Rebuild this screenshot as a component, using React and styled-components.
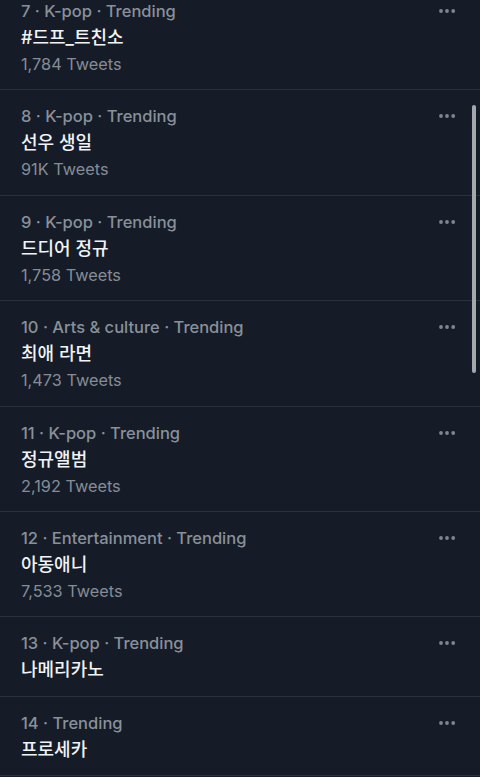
import styled, { createGlobalStyle } from 'styled-components'

const trends = [
  { rank: 7, category: 'K-pop', title: '#드프_트친소', count: '1,784 Tweets' },
  { rank: 8, category: 'K-pop', title: '선우 생일', count: '91K Tweets' },
  { rank: 9, category: 'K-pop', title: '드디어 정규', count: '1,758 Tweets' },
  { rank: 10, category: 'Arts & culture', title: '최애 라면', count: '1,473 Tweets' },
  { rank: 11, category: 'K-pop', title: '정규앨범', count: '2,192 Tweets' },
  { rank: 12, category: 'Entertainment', title: '아동애니', count: '7,533 Tweets' },
  { rank: 13, category: 'K-pop', title: '나메리카노' },
  { rank: 14, title: '프로세카' },
]

const GlobalStyle = createGlobalStyle`
  html, body {
    margin: 0;
    background: #151c27;
    overflow: hidden;
  }
  body {
    font-family: Inter, "Noto Sans CJK KR", sans-serif;
  }
`

const Screen = styled.div`
  position: relative;
  width: 480px;
  height: 777px;
  overflow: hidden;
  background: #151c27;
`

const List = styled.div`
  margin-top: -15px;
`

const Row = styled.div`
  display: flex;
  align-items: flex-start;
  padding: 13px 24px 12.4px 21px;
  border-bottom: 1px solid #2a313c;
`

const Body = styled.div`
  flex: 1;
`

const Meta = styled.div`
  font-size: 16.5px;
  font-weight: 500;
  line-height: 26px;
  color: #89909a;
`

const Title = styled.div`
  font-size: 18px;
  font-weight: 500;
  line-height: 27px;
  color: #f1f3f5;
`

const Count = styled.div`
  font-size: 16.3px;
  line-height: 26px;
  color: #858c96;
`

const More = styled.svg`
  margin-top: 10px;
  margin-left: 8px;
  flex-shrink: 0;
`

const Scrollbar = styled.div`
  position: absolute;
  top: 105px;
  right: 4px;
  width: 4px;
  height: 268px;
  border-radius: 2px;
  background: #a4a8ae;
`

function Dots() {
  return (
    <More width="18" height="6" viewBox="0 0 18 6">
      <circle cx="3" cy="3" r="1.9" fill="#7f8690" />
      <circle cx="9" cy="3" r="1.9" fill="#7f8690" />
      <circle cx="15.2" cy="3" r="1.9" fill="#7f8690" />
    </More>
  )
}

export default function App() {
  return (
    <Screen>
      <GlobalStyle />
      <List>
        {trends.map((t) => (
          <Row key={t.rank}>
            <Body>
              <Meta>
                {t.rank} · {t.category ? `${t.category} · ` : ''}Trending
              </Meta>
              <Title>{t.title}</Title>
              {t.count && <Count>{t.count}</Count>}
            </Body>
            <Dots />
          </Row>
        ))}
      </List>
      <Scrollbar />
    </Screen>
  )
}
